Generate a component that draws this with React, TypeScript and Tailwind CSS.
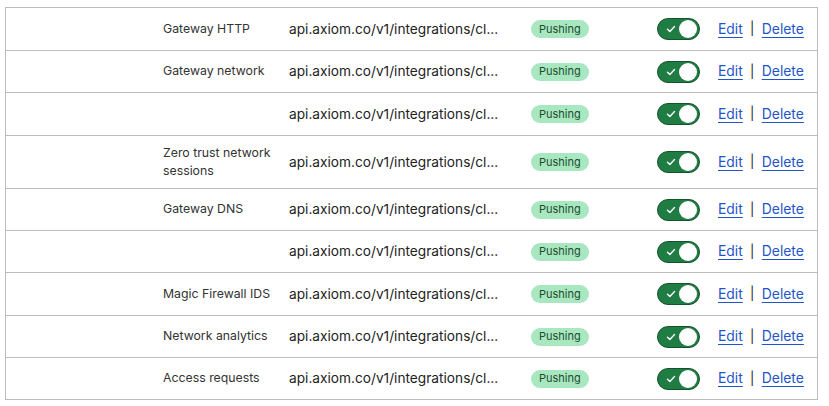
import React from "react";

const rows: { name: string[]; h: string }[] = [
  { name: ["Gateway HTTP"], h: "h-[43px]" },
  { name: ["Gateway network"], h: "h-[42px]" },
  { name: [], h: "h-[43px]" },
  { name: ["Zero trust network", "sessions"], h: "h-[53px]" },
  { name: ["Gateway DNS"], h: "h-[42px]" },
  { name: [], h: "h-[42px]" },
  { name: ["Magic Firewall IDS"], h: "h-[43px]" },
  { name: ["Network analytics"], h: "h-[42px]" },
  { name: ["Access requests"], h: "h-[42px]" },
];

function Toggle() {
  return (
    <div className="w-[43px] h-[22px] rounded-full bg-[#1f7d44] border border-[#15532c] flex items-center justify-between pl-[8px] pr-[2px]">
      <svg width="10" height="8" viewBox="0 0 10 8" fill="none">
        <path d="M1.5 4.2 L3.9 6.4 L8.5 1.6" stroke="white" strokeWidth="1.4" strokeLinecap="round" strokeLinejoin="round" />
      </svg>
      <div className="w-[18px] h-[18px] rounded-full bg-white" />
    </div>
  );
}

export default function App() {
  return (
    <div className="w-[829px] h-[406px] bg-white overflow-hidden pt-[7px] pl-[5px]" style={{ fontFamily: "Inter, 'Noto Sans', sans-serif" }}>
      <div className="w-[813px] border-t border-l border-r border-[#bdbdbd]">
        {rows.map((r, i) => (
          <div key={i} className={`flex items-center border-b border-[#bdbdbd] ${r.h}`}>
            <div className="w-[157px] shrink-0" />
            <div className="w-[126px] shrink-0 text-[12.3px] leading-[18px] text-[#333] -mt-[1px]">
              {r.name.map((n, j) => (
                <div key={j}>{n}</div>
              ))}
            </div>
            <div className="w-[242px] shrink-0 text-[13.7px] text-[#222] whitespace-nowrap">
              api.axiom.co/v1/integrations/cl...
            </div>
            <div className="w-[126px] shrink-0 flex">
              <span className="flex items-center h-[18px] px-[8px] rounded-full bg-[#a9e7c1] text-[11px] text-[#1d4d2f]">
                Pushing
              </span>
            </div>
            <div className="w-[61px] shrink-0 flex">
              <Toggle />
            </div>
            <div className="flex items-center text-[13.9px] whitespace-nowrap">
              <span className="underline underline-offset-[3px] decoration-[1px] text-[#1f55c8]">Edit</span>
              <span className="w-[19px] text-center text-[#222] text-[13px]">|</span>
              <span className="underline underline-offset-[3px] decoration-[1px] text-[#1f55c8]">Delete</span>
            </div>
          </div>
        ))}
      </div>
    </div>
  );
}
